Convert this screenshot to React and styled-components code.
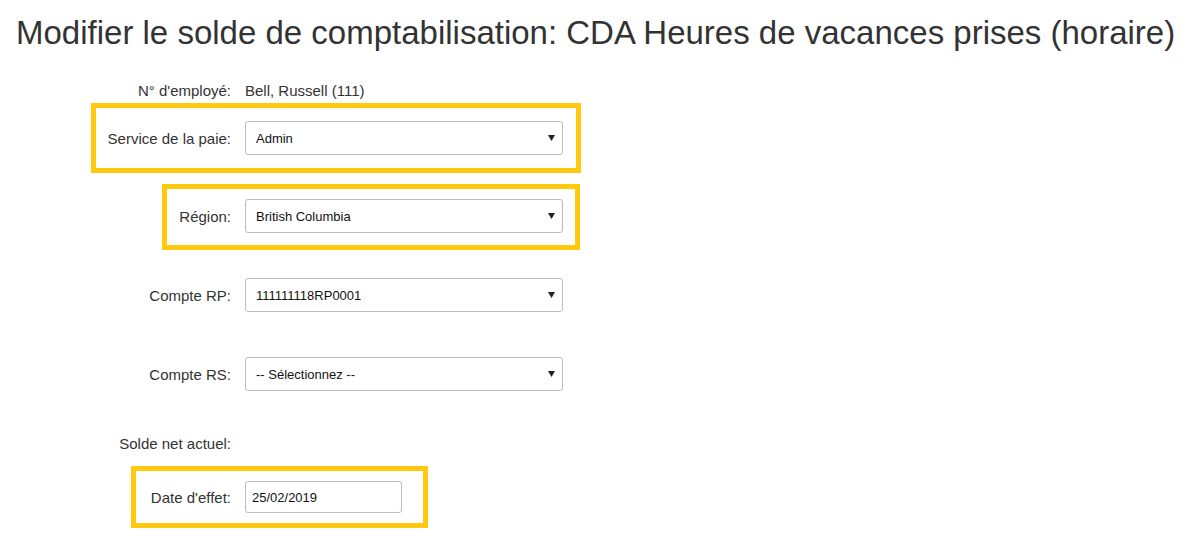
import React from 'react';
import styled, { createGlobalStyle } from 'styled-components';

const GlobalStyle = createGlobalStyle`
  body {
    margin: 0;
    background: #ffffff;
    font-family: "Liberation Sans", Arial, sans-serif;
    color: #333333;
  }
`;

const Page = styled.div`
  width: 1185px;
  height: 540px;
  overflow: hidden;
`;

const Title = styled.h1`
  margin: 0;
  padding: 13px 0 0 16px;
  font-size: 33px;
  line-height: 40px;
  font-weight: 400;
  color: #333333;
  white-space: nowrap;
`;

const Form = styled.div`
  display: flex;
  flex-direction: column;
  margin-top: 20px;
`;

const Row = styled.div`
  position: relative;
  display: grid;
  grid-template-columns: 231px 318px;
  column-gap: 14px;
  align-items: center;
  width: 563px;
  height: ${(p) => p.$h || 34}px;
  margin-top: ${(p) => p.$mt || 0}px;

  ${(p) =>
    p.$hl &&
    `
    &::before {
      content: "";
      position: absolute;
      left: ${p.$hl.left}px;
      right: ${p.$hl.right}px;
      top: ${p.$hl.top}px;
      bottom: ${p.$hl.bottom}px;
      border: 5px solid #ffc90e;
      pointer-events: none;
    }
  `}
`;

const Label = styled.label`
  text-align: right;
  font-size: 15px;
  color: #333333;
`;

const Value = styled.span`
  font-size: 15px;
  color: #333333;
`;

const SelectWrap = styled.div`
  position: relative;
  width: 318px;
  height: 34px;
`;

const Select = styled.select`
  appearance: none;
  -webkit-appearance: none;
  width: 100%;
  height: 100%;
  box-sizing: border-box;
  padding: 0 28px 0 10px;
  border: 1px solid #bdbdbd;
  border-radius: 3px;
  background: #ffffff;
  font-family: "Liberation Sans", Arial, sans-serif;
  font-size: 13px;
  color: #111111;
`;

const Caret = styled.svg`
  position: absolute;
  right: 8px;
  top: 50%;
  width: 7px;
  height: 6px;
  margin-top: -3px;
  pointer-events: none;
`;

const DateInput = styled.input`
  width: 157px;
  height: 32px;
  box-sizing: border-box;
  padding: 0 6px;
  border: 1px solid #bdbdbd;
  border-radius: 3px;
  font-family: "Liberation Sans", Arial, sans-serif;
  font-size: 13px;
  color: #111111;
`;

function Dropdown({ value }) {
  return (
    <SelectWrap>
      <Select defaultValue={value}>
        <option value={value}>{value}</option>
      </Select>
      <Caret viewBox="0 0 7 6">
        <path d="M0 0 H7 L3.5 6 Z" fill="#222" />
      </Caret>
    </SelectWrap>
  );
}

export default function App() {
  return (
    <Page>
      <GlobalStyle />
      <Title>Modifier le solde de comptabilisation: CDA Heures de vacances prises (horaire)</Title>
      <Form>
        <Row>
          <Label>N° d'employé:</Label>
          <Value>Bell, Russell (111)</Value>
        </Row>
        <Row $mt={14} $hl={{ left: 91, right: -18, top: -18, bottom: -18 }}>
          <Label>Service de la paie:</Label>
          <Dropdown value="Admin" />
        </Row>
        <Row $mt={44} $hl={{ left: 162, right: -17, top: -15, bottom: -17 }}>
          <Label>Région:</Label>
          <Dropdown value="British Columbia" />
        </Row>
        <Row $mt={45}>
          <Label>Compte RP:</Label>
          <Dropdown value="111111118RP0001" />
        </Row>
        <Row $mt={45}>
          <Label>Compte RS:</Label>
          <Dropdown value="-- Sélectionnez --" />
        </Row>
        <Row $mt={35}>
          <Label>Solde net actuel:</Label>
          <span />
        </Row>
        <Row $mt={21} $h={32} $hl={{ left: 131, right: 135, top: -15, bottom: -15 }}>
          <Label>Date d'effet:</Label>
          <DateInput defaultValue="25/02/2019" />
        </Row>
      </Form>
    </Page>
  );
}
